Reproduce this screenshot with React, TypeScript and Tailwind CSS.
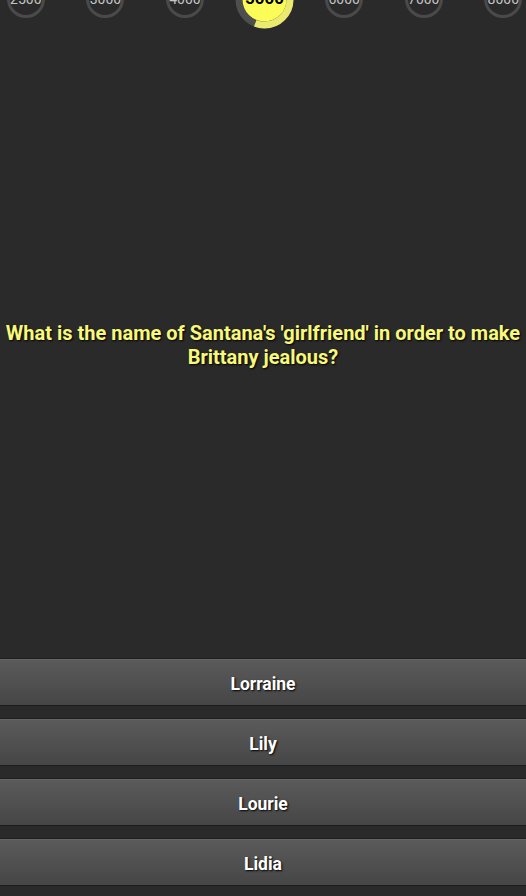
import React from "react";

const labels = ["2500", "3000", "4000", "5000", "6000", "7000", "8000"];

function BigCircle() {
  const r = 25.5;
  const c = 2 * Math.PI * r;
  const sweep = 200 / 360;
  return (
    <div className="relative w-[59px] h-[59px] shrink-0">
      <svg width="59" height="59" viewBox="0 0 59 59" className="absolute inset-0">
        <circle cx="29.5" cy="29.5" r={r} fill="none" stroke="#4e4e4e" strokeWidth="7" />
        <circle
          cx="29.5"
          cy="29.5"
          r={r}
          fill="none"
          stroke="#eaea70"
          strokeWidth="7"
          strokeDasharray={`${c * sweep} ${c}`}
          transform="rotate(-90 29.5 29.5)"
        />
        <circle cx="29.5" cy="29.5" r="22" fill="#fcfc58" />
      </svg>
      <div className="absolute inset-0 flex items-center justify-center text-[17px] font-bold text-black [font-family:Roboto,'Liberation_Sans',sans-serif]">
        5000
      </div>
    </div>
  );
}

function SmallCircle({ label }: { label: string }) {
  return (
    <div className="w-[38px] h-[38px] rounded-full border-[3px] border-[#4a4a4a] flex items-center justify-center text-[14px] text-[#c4c4c4] [font-family:Roboto,'Liberation_Sans',sans-serif] shrink-0">
      {label}
    </div>
  );
}

const answers = ["Lorraine", "Lily", "Lourie", "Lidia"];

export default function App() {
  return (
    <div className="w-[526px] h-[896px] bg-[#2a2a2a] flex flex-col overflow-hidden [font-family:Roboto,'Liberation_Sans',sans-serif]">
      <div className="h-[30px] overflow-hidden shrink-0">
        <div className="flex items-center h-[60px] mt-[-31px] ml-[-14px]">
          {labels.map((l, i) => (
            <div key={l} className="w-[79.6px] shrink-0 flex justify-center">
              {i === 3 ? <BigCircle /> : <SmallCircle label={l} />}
            </div>
          ))}
        </div>
      </div>
      <div className="flex-1 flex items-center justify-center px-1">
        <p className="text-center text-[20px] leading-[24px] font-bold text-[#f8f87a] [text-shadow:1px_1px_2px_#000] pt-[2px]">
          What is the name of Santana's 'girlfriend' in order to make Brittany jealous?
        </p>
      </div>
      <div className="flex flex-col gap-[12px] pb-[10px] shrink-0">
        {answers.map((a) => (
          <div
            key={a}
            className="h-[48px] pt-[5px] flex items-center justify-center bg-gradient-to-b from-[#5b5b5b] to-[#464646] border-t border-t-[#1e1e1e] border-b border-b-[#1c1c1c] shadow-[inset_0_1px_0_#666] text-white text-[17.5px] font-bold [text-shadow:1px_1px_2px_#000]"
          >
            {a}
          </div>
        ))}
      </div>
    </div>
  );
}
